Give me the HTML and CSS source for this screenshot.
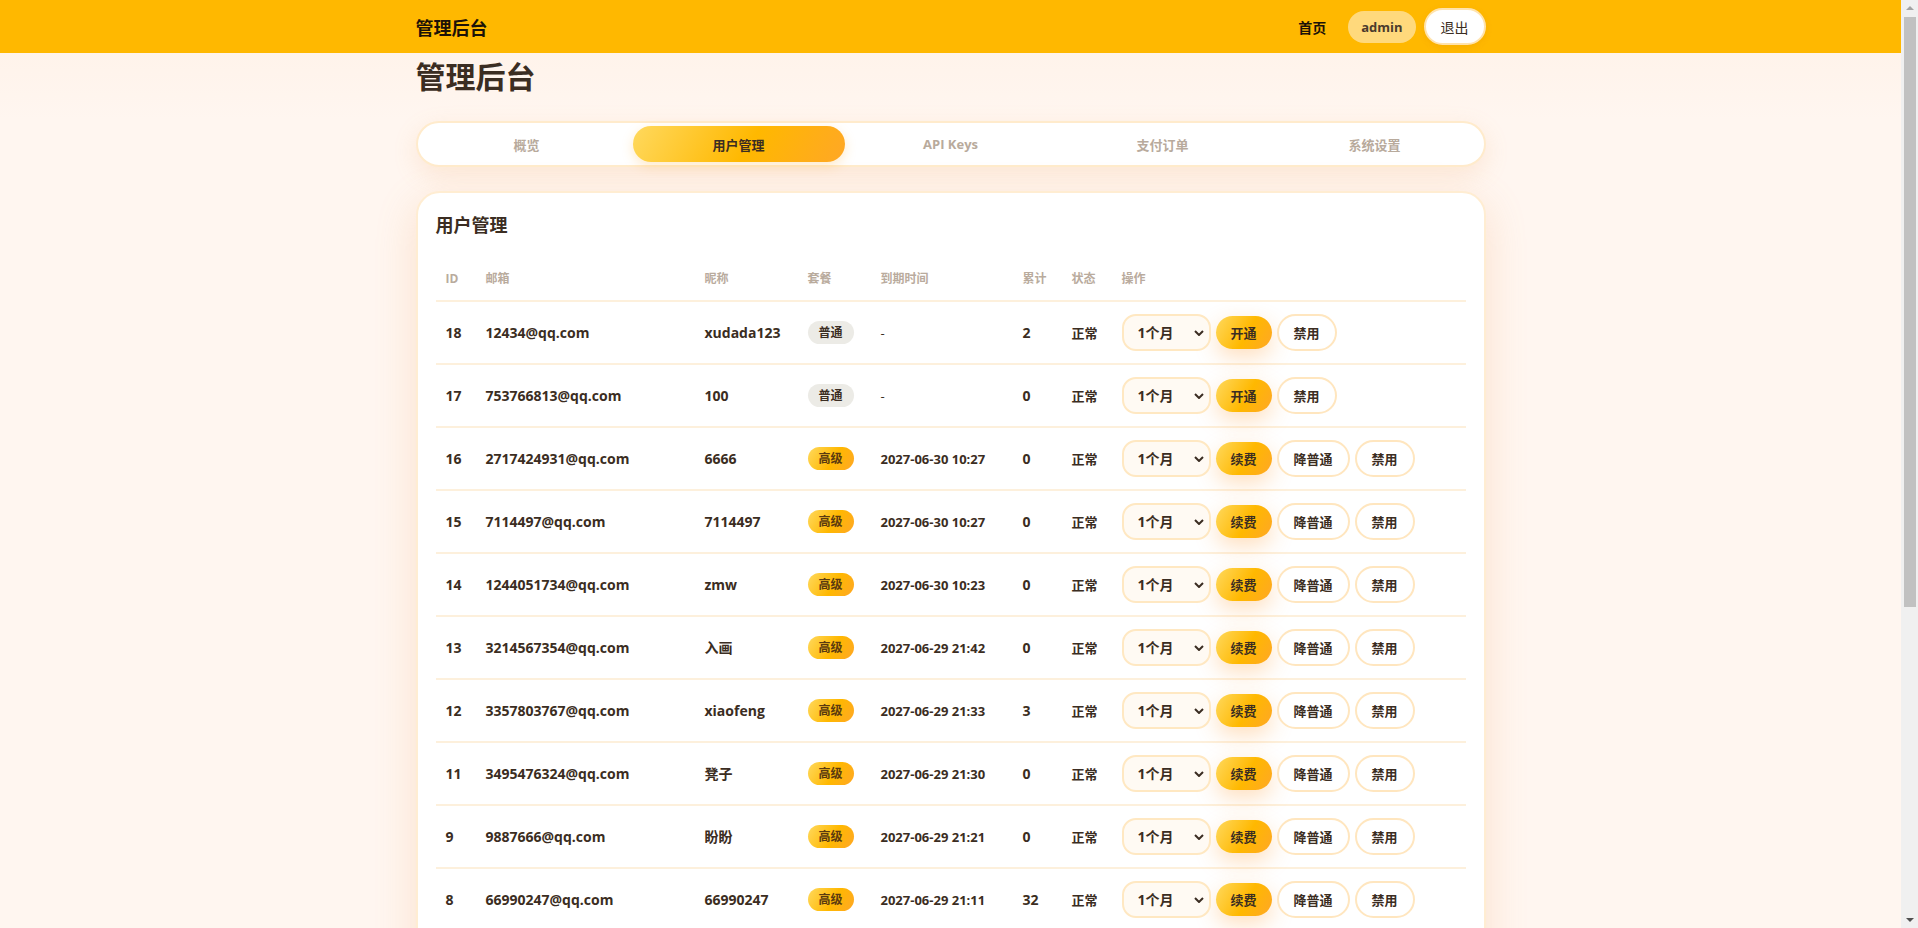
FILE: index.html
```html
<!DOCTYPE html>
<html lang="zh">
<head>
    <meta charset="UTF-8">
    <meta name="viewport" content="width=device-width, initial-scale=1.0">
    <title>管理后台</title>
    <link rel="stylesheet" href="styles.css">
</head>
<body>
    <header class="topbar">
        <div class="topbar-inner">
            <div class="brand">管理后台</div>
            <nav class="nav">
                <a class="nav-link" href="#">首页</a>
                <span class="nav-user">admin</span>
                <button class="nav-logout">退出</button>
            </nav>
        </div>
    </header>

    <main class="main">
        <h1 class="page-title">管理后台</h1>

        <div class="tabs">
            <div class="tab">概览</div>
            <div class="tab active">用户管理</div>
            <div class="tab">API Keys</div>
            <div class="tab">支付订单</div>
            <div class="tab">系统设置</div>
        </div>

        <section class="card">
            <h2 class="card-title">用户管理</h2>
            <table class="user-table">
                <colgroup>
                    <col style="width: 40px">
                    <col style="width: 219px">
                    <col style="width: 103px">
                    <col style="width: 73px">
                    <col style="width: 142px">
                    <col style="width: 49px">
                    <col style="width: 50px">
                    <col>
                </colgroup>
                <thead>
                    <tr>
                        <th>ID</th><th>邮箱</th><th>昵称</th><th>套餐</th><th>到期时间</th><th>累计</th><th>状态</th><th>操作</th>
                    </tr>
                </thead>
                <tbody>
                    <tr>
                        <td>18</td><td>12434@qq.com</td><td>xudada123</td>
                        <td><span class="badge">普通</span></td><td class="date none">-</td><td>2</td><td class="status">正常</td>
                        <td><div class="actions">
                            <div class="period"><select><option>1个月</option><option>3个月</option><option>12个月</option></select><svg viewBox="0 0 10 6"><path d="M1 1l4 4 4-4"/></svg></div>
                            <button class="btn btn-primary">开通</button><button class="btn">禁用</button>
                        </div></td>
                    </tr>
                    <tr>
                        <td>17</td><td>753766813@qq.com</td><td>100</td>
                        <td><span class="badge">普通</span></td><td class="date none">-</td><td>0</td><td class="status">正常</td>
                        <td><div class="actions">
                            <div class="period"><select><option>1个月</option><option>3个月</option><option>12个月</option></select><svg viewBox="0 0 10 6"><path d="M1 1l4 4 4-4"/></svg></div>
                            <button class="btn btn-primary">开通</button><button class="btn">禁用</button>
                        </div></td>
                    </tr>
                    <tr>
                        <td>16</td><td>2717424931@qq.com</td><td>6666</td>
                        <td><span class="badge badge-pro">高级</span></td><td class="date">2027-06-30 10:27</td><td>0</td><td class="status">正常</td>
                        <td><div class="actions">
                            <div class="period"><select><option>1个月</option><option>3个月</option><option>12个月</option></select><svg viewBox="0 0 10 6"><path d="M1 1l4 4 4-4"/></svg></div>
                            <button class="btn btn-primary">续费</button><button class="btn">降普通</button><button class="btn">禁用</button>
                        </div></td>
                    </tr>
                    <tr>
                        <td>15</td><td>7114497@qq.com</td><td>7114497</td>
                        <td><span class="badge badge-pro">高级</span></td><td class="date">2027-06-30 10:27</td><td>0</td><td class="status">正常</td>
                        <td><div class="actions">
                            <div class="period"><select><option>1个月</option><option>3个月</option><option>12个月</option></select><svg viewBox="0 0 10 6"><path d="M1 1l4 4 4-4"/></svg></div>
                            <button class="btn btn-primary">续费</button><button class="btn">降普通</button><button class="btn">禁用</button>
                        </div></td>
                    </tr>
                    <tr>
                        <td>14</td><td>1244051734@qq.com</td><td>zmw</td>
                        <td><span class="badge badge-pro">高级</span></td><td class="date">2027-06-30 10:23</td><td>0</td><td class="status">正常</td>
                        <td><div class="actions">
                            <div class="period"><select><option>1个月</option><option>3个月</option><option>12个月</option></select><svg viewBox="0 0 10 6"><path d="M1 1l4 4 4-4"/></svg></div>
                            <button class="btn btn-primary">续费</button><button class="btn">降普通</button><button class="btn">禁用</button>
                        </div></td>
                    </tr>
                    <tr>
                        <td>13</td><td>3214567354@qq.com</td><td>入画</td>
                        <td><span class="badge badge-pro">高级</span></td><td class="date">2027-06-29 21:42</td><td>0</td><td class="status">正常</td>
                        <td><div class="actions">
                            <div class="period"><select><option>1个月</option><option>3个月</option><option>12个月</option></select><svg viewBox="0 0 10 6"><path d="M1 1l4 4 4-4"/></svg></div>
                            <button class="btn btn-primary">续费</button><button class="btn">降普通</button><button class="btn">禁用</button>
                        </div></td>
                    </tr>
                    <tr>
                        <td>12</td><td>3357803767@qq.com</td><td>xiaofeng</td>
                        <td><span class="badge badge-pro">高级</span></td><td class="date">2027-06-29 21:33</td><td>3</td><td class="status">正常</td>
                        <td><div class="actions">
                            <div class="period"><select><option>1个月</option><option>3个月</option><option>12个月</option></select><svg viewBox="0 0 10 6"><path d="M1 1l4 4 4-4"/></svg></div>
                            <button class="btn btn-primary">续费</button><button class="btn">降普通</button><button class="btn">禁用</button>
                        </div></td>
                    </tr>
                    <tr>
                        <td>11</td><td>3495476324@qq.com</td><td>凳子</td>
                        <td><span class="badge badge-pro">高级</span></td><td class="date">2027-06-29 21:30</td><td>0</td><td class="status">正常</td>
                        <td><div class="actions">
                            <div class="period"><select><option>1个月</option><option>3个月</option><option>12个月</option></select><svg viewBox="0 0 10 6"><path d="M1 1l4 4 4-4"/></svg></div>
                            <button class="btn btn-primary">续费</button><button class="btn">降普通</button><button class="btn">禁用</button>
                        </div></td>
                    </tr>
                    <tr>
                        <td>9</td><td>9887666@qq.com</td><td>盼盼</td>
                        <td><span class="badge badge-pro">高级</span></td><td class="date">2027-06-29 21:21</td><td>0</td><td class="status">正常</td>
                        <td><div class="actions">
                            <div class="period"><select><option>1个月</option><option>3个月</option><option>12个月</option></select><svg viewBox="0 0 10 6"><path d="M1 1l4 4 4-4"/></svg></div>
                            <button class="btn btn-primary">续费</button><button class="btn">降普通</button><button class="btn">禁用</button>
                        </div></td>
                    </tr>
                    <tr>
                        <td>8</td><td>66990247@qq.com</td><td>66990247</td>
                        <td><span class="badge badge-pro">高级</span></td><td class="date">2027-06-29 21:11</td><td>32</td><td class="status">正常</td>
                        <td><div class="actions">
                            <div class="period"><select><option>1个月</option><option>3个月</option><option>12个月</option></select><svg viewBox="0 0 10 6"><path d="M1 1l4 4 4-4"/></svg></div>
                            <button class="btn btn-primary">续费</button><button class="btn">降普通</button><button class="btn">禁用</button>
                        </div></td>
                    </tr>
                    <tr>
                        <td>7</td><td>1589632477@qq.com</td><td>小鱼</td>
                        <td><span class="badge">普通</span></td><td class="date none">-</td><td>0</td><td class="status">正常</td>
                        <td><div class="actions">
                            <div class="period"><select><option>1个月</option><option>3个月</option><option>12个月</option></select><svg viewBox="0 0 10 6"><path d="M1 1l4 4 4-4"/></svg></div>
                            <button class="btn btn-primary">开通</button><button class="btn">禁用</button>
                        </div></td>
                    </tr>
                    <tr>
                        <td>6</td><td>2204567781@qq.com</td><td>test01</td>
                        <td><span class="badge badge-pro">高级</span></td><td class="date">2027-06-28 19:05</td><td>1</td><td class="status">正常</td>
                        <td><div class="actions">
                            <div class="period"><select><option>1个月</option><option>3个月</option><option>12个月</option></select><svg viewBox="0 0 10 6"><path d="M1 1l4 4 4-4"/></svg></div>
                            <button class="btn btn-primary">续费</button><button class="btn">降普通</button><button class="btn">禁用</button>
                        </div></td>
                    </tr>
                    <tr>
                        <td>5</td><td>895541230@qq.com</td><td>星河</td>
                        <td><span class="badge">普通</span></td><td class="date none">-</td><td>0</td><td class="status">正常</td>
                        <td><div class="actions">
                            <div class="period"><select><option>1个月</option><option>3个月</option><option>12个月</option></select><svg viewBox="0 0 10 6"><path d="M1 1l4 4 4-4"/></svg></div>
                            <button class="btn btn-primary">开通</button><button class="btn">禁用</button>
                        </div></td>
                    </tr>
                    <tr>
                        <td>4</td><td>1357924680@qq.com</td><td>demo</td>
                        <td><span class="badge">普通</span></td><td class="date none">-</td><td>0</td><td class="status">正常</td>
                        <td><div class="actions">
                            <div class="period"><select><option>1个月</option><option>3个月</option><option>12个月</option></select><svg viewBox="0 0 10 6"><path d="M1 1l4 4 4-4"/></svg></div>
                            <button class="btn btn-primary">开通</button><button class="btn">禁用</button>
                        </div></td>
                    </tr>
                    <tr>
                        <td>3</td><td>2468013579@qq.com</td><td>阿明</td>
                        <td><span class="badge badge-pro">高级</span></td><td class="date">2027-06-27 15:48</td><td>5</td><td class="status">正常</td>
                        <td><div class="actions">
                            <div class="period"><select><option>1个月</option><option>3个月</option><option>12个月</option></select><svg viewBox="0 0 10 6"><path d="M1 1l4 4 4-4"/></svg></div>
                            <button class="btn btn-primary">续费</button><button class="btn">降普通</button><button class="btn">禁用</button>
                        </div></td>
                    </tr>
                    <tr>
                        <td>2</td><td>10086@qq.com</td><td>test</td>
                        <td><span class="badge">普通</span></td><td class="date none">-</td><td>1</td><td class="status">正常</td>
                        <td><div class="actions">
                            <div class="period"><select><option>1个月</option><option>3个月</option><option>12个月</option></select><svg viewBox="0 0 10 6"><path d="M1 1l4 4 4-4"/></svg></div>
                            <button class="btn btn-primary">开通</button><button class="btn">禁用</button>
                        </div></td>
                    </tr>
                    <tr>
                        <td>1</td><td>admin@qq.com</td><td>admin</td>
                        <td><span class="badge badge-pro">高级</span></td><td class="date">2099-12-31 23:59</td><td>0</td><td class="status">正常</td>
                        <td><div class="actions">
                            <div class="period"><select><option>1个月</option><option>3个月</option><option>12个月</option></select><svg viewBox="0 0 10 6"><path d="M1 1l4 4 4-4"/></svg></div>
                            <button class="btn btn-primary">续费</button><button class="btn">降普通</button><button class="btn">禁用</button>
                        </div></td>
                    </tr>
                </tbody>
            </table>
        </section>
    </main>

    <!-- 窗口右侧滚动条 -->
    <div class="scrollbar">
        <svg class="scroll-arrow up" viewBox="0 0 8 4"><path d="M0 4L4 0L8 4Z"/></svg>
        <div class="scroll-thumb"></div>
        <svg class="scroll-arrow down" viewBox="0 0 8 4"><path d="M0 0L8 0L4 4Z"/></svg>
    </div>
</body>
</html>
```

FILE: styles.css
```css
* {
    box-sizing: border-box;
}

html {
    background: #fff6f0;
}

body {
    margin: 0 17px 0 0; /* 给滚动条留位置 */
    font-family: "Open Sans", "Noto Sans CJK SC", sans-serif;
    color: #3b2d22;
    background: linear-gradient(180deg, #fff1e6 0, #fff6f0 120px, #fff6f0 100%);
}

/* 滚动条 */
.scrollbar {
    position: fixed;
    top: 0;
    right: 0;
    width: 17px;
    height: 100vh;
    background: #f0f0f0;
    z-index: 10;
}

.scroll-thumb {
    position: absolute;
    top: 17px;
    left: 3px;
    width: 12px;
    height: 590px;
    background: #c1c1c1;
}

.scroll-arrow {
    position: absolute;
    left: 5px;
    width: 8px;
    height: 4px;
}

.scroll-arrow.up {
    top: 6px;
    fill: #a3a3a3;
}

.scroll-arrow.down {
    bottom: 6px;
    fill: #505050;
}

/* 顶部导航 */
.topbar {
    background: #ffb800;
    height: 53px;
}

.topbar-inner {
    width: 1070px;
    height: 100%;
    margin: 0 auto;
    display: flex;
    align-items: center;
    justify-content: space-between;
}

.brand {
    font-size: 18px;
    font-weight: 700;
    color: #1c1208;
}

.nav {
    display: flex;
    align-items: center;
    gap: 8px;
}

.nav-link {
    padding: 0 14px;
    font-size: 14px;
    font-weight: 700;
    color: #1c1208;
    text-decoration: none;
}

.nav-user {
    height: 32px;
    padding: 0 13px;
    border-radius: 16px;
    background: #ffd97c;
    font-size: 13px;
    font-weight: 700;
    color: #4b3b2c;
    display: flex;
    align-items: center;
}

.nav-logout {
    width: 62px;
    height: 37px;
    border-radius: 19px;
    border: 2px solid #ffe3ad;
    background: #fff;
    font-family: inherit;
    font-size: 14px;
    color: #3b2d22;
    box-shadow: 0 2px 6px rgba(200, 120, 0, 0.15);
    cursor: pointer;
}

/* 主体 */
.main {
    width: 1070px;
    margin: 0 auto;
    padding: 4px 0 24px;
}

.page-title {
    margin: 0 0 24px;
    font-size: 30px;
    line-height: 40px;
    font-weight: 700;
    color: #3b2d22;
}

.tabs {
    display: grid;
    grid-template-columns: repeat(5, 1fr);
    padding: 3px;
    border: 2px solid #ffebcc;
    border-radius: 24px;
    background: #fff;
    box-shadow: 0 8px 24px rgba(240, 160, 90, 0.18);
    margin-bottom: 24px;
}

.tab {
    height: 36px;
    border-radius: 18px;
    display: flex;
    align-items: center;
    justify-content: center;
    font-size: 13px;
    font-weight: 700;
    color: #b8aa9c;
    cursor: pointer;
}

.tab.active {
    color: #3b2d22;
    background: linear-gradient(120deg, #ffd95e 0%, #ffb800 55%, #ffa726 100%);
    box-shadow: 0 4px 12px rgba(255, 170, 40, 0.25);
}

.card {
    background: #fff;
    border: 2px solid #ffedd2;
    border-radius: 24px;
    padding: 19px 18px 20px;
    box-shadow: 0 12px 40px rgba(240, 160, 90, 0.24);
}

.card-title {
    margin: 0 0 19px;
    font-size: 18px;
    line-height: 27px;
    font-weight: 700;
}

/* 用户表格 */
.user-table {
    width: 100%;
    border-collapse: collapse;
    table-layout: fixed;
}

.user-table th {
    padding: 12px 10px;
    font-size: 12px;
    line-height: 18px;
    font-weight: 700;
    color: #b9ab9d;
    text-align: left;
    border-bottom: 2px solid #fdf0dc;
}

.user-table td {
    padding: 12px 10px;
    font-size: 14px;
    font-weight: 700;
    line-height: 20px;
    white-space: nowrap;
    border-bottom: 2px solid #fdf0dc;
}

.user-table tbody tr:last-child td {
    border-bottom: none;
}

.user-table td.date {
    font-size: 13px;
}

.user-table td.none {
    font-weight: 400;
}

.user-table td.status {
    font-size: 13px;
    font-weight: 600;
}

.badge {
    display: inline-flex;
    align-items: center;
    height: 23px;
    padding: 0 11px;
    border-radius: 12px;
    font-size: 12px;
    font-weight: 700;
    background: #ecebe6;
    color: #3b2d22;
    vertical-align: middle;
}

.badge-pro {
    background: linear-gradient(120deg, #ffd95e 0%, #ffb800 55%, #ffa726 100%);
    color: #5a3a10;
}

.actions {
    display: flex;
    align-items: center;
    gap: 5px;
}

.period {
    position: relative;
    width: 89px;
    height: 37px;
}

.period select {
    appearance: none;
    -webkit-appearance: none;
    width: 100%;
    height: 100%;
    padding: 0 0 0 14px;
    border: 2px solid #ffe8c2;
    border-radius: 14px;
    background: #fffaf3;
    font-family: inherit;
    font-size: 14px;
    font-weight: 700;
    color: #3b2d22;
    outline: none;
}

.period svg {
    position: absolute;
    right: 7px;
    top: 16px;
    width: 10px;
    height: 6px;
    fill: none;
    stroke: #3b2d22;
    stroke-width: 2;
    pointer-events: none;
}

.btn {
    height: 37px;
    padding: 0 15px;
    border: 2px solid #ffe6bf;
    border-radius: 19px;
    background: #fff;
    font-family: inherit;
    font-size: 13px;
    font-weight: 700;
    color: #3b2d22;
    cursor: pointer;
}

.btn-primary {
    height: 33px;
    padding: 0 15px;
    border: none;
    border-radius: 17px;
    background: linear-gradient(120deg, #ffd95e 0%, #ffb800 55%, #ffa726 100%);
    box-shadow: 0 8px 22px rgba(255, 150, 40, 0.3);
}
```
